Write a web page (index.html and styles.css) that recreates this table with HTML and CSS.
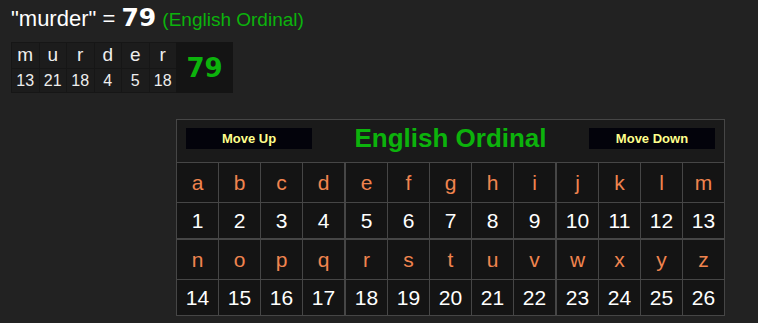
FILE: index.html
```html
<!DOCTYPE html>
<html>
<head>
    <title>Gematria - murder</title>
    <link rel="stylesheet" href="styles.css">
</head>
<body>
    <div class="result">
        <span class="phrase">"murder"</span> = <span class="total">79</span>
        <span class="cipher-name">(English Ordinal)</span>
    </div>

    <div class="breakdown">
        <div class="letters">
            <span>m</span><span>u</span><span>r</span><span>d</span><span>e</span><span>r</span>
            <span>13</span><span>21</span><span>18</span><span>4</span><span>5</span><span>18</span>
        </div>
        <div class="breakdown-sum">79</div>
    </div>

    <div class="chart-wrap">
        <table class="chart">
            <tr class="chart-head">
                <td colspan="13">
                    <div class="head-row">
                        <button class="move-btn">Move Up</button>
                        <span class="chart-title">English Ordinal</span>
                        <button class="move-btn">Move Down</button>
                    </div>
                </td>
            </tr>
            <tr class="row-letter">
                <td>a</td><td>b</td><td>c</td><td>d</td>
                <td class="split">e</td><td>f</td><td>g</td><td>h</td><td>i</td>
                <td class="split">j</td><td>k</td><td>l</td><td>m</td>
            </tr>
            <tr class="row-value">
                <td>1</td><td>2</td><td>3</td><td>4</td>
                <td class="split">5</td><td>6</td><td>7</td><td>8</td><td>9</td>
                <td class="split">10</td><td>11</td><td>12</td><td>13</td>
            </tr>
            <tr class="row-letter row-break">
                <td>n</td><td>o</td><td>p</td><td>q</td>
                <td class="split">r</td><td>s</td><td>t</td><td>u</td><td>v</td>
                <td class="split">w</td><td>x</td><td>y</td><td>z</td>
            </tr>
            <tr class="row-value">
                <td>14</td><td>15</td><td>16</td><td>17</td>
                <td class="split">18</td><td>19</td><td>20</td><td>21</td><td>22</td>
                <td class="split">23</td><td>24</td><td>25</td><td>26</td>
            </tr>
        </table>
    </div>
</body>
</html>
```

FILE: styles.css
```css
body {
    margin: 0;
    padding: 2px 11px 0;
    background: #222222;
    color: #ffffff;
    font-family: Arial, "Liberation Sans", sans-serif;
}

/* phrase = total line */
.result {
    font-size: 22px;
    line-height: 32px;
    white-space: nowrap;
}
.total {
    font-family: "DejaVu Sans", Verdana, sans-serif;
    font-size: 25px;
    font-weight: bold;
}
.cipher-name {
    font-size: 19px;
    color: #0cb30c;
}

/* per letter breakdown */
.breakdown {
    display: flex;
    margin-top: 6px;
    width: 222px;
    background: #161616;
}
.letters {
    display: grid;
    grid-template-columns: repeat(6, 26.5px);
    grid-template-rows: 25px 23px;
    gap: 1px;
    padding: 1px 0 1px 1px;
    background: #161616;
}
.letters span {
    background: #1c1c1c;
    font-size: 16px;
    text-align: center;
    line-height: 24px;
    color: #eeeeee;
}
.letters span:nth-child(-n+6) {
    font-size: 19px;
}
.breakdown-sum {
    flex: 1;
    display: flex;
    align-items: center;
    justify-content: center;
    font-family: "DejaVu Sans", Verdana, sans-serif;
    font-size: 26px;
    font-weight: bold;
    color: #0cb30c;
    background: #141414;
}

/* cipher chart */
.chart-wrap {
    padding-left: 165px;
    margin-top: 26px;
}
.chart {
    border-collapse: collapse;
    background: #141414;
    font-size: 21px;
}
.chart td {
    border: 1px solid #464646;
    width: 41px;
    padding: 0;
    text-align: center;
}
.chart td.split {
    border-left: 2px solid #464646;
}
.chart-head td {
    background: #1a1a1a;
    height: 42px;
}
.head-row {
    display: flex;
    align-items: center;
    justify-content: space-between;
    padding: 0 9px 5px;
}
.move-btn {
    width: 126px;
    height: 21px;
    border: none;
    background: #03030b;
    color: #ffff8c;
    font-family: Arial, "Liberation Sans", sans-serif;
    font-size: 13px;
    font-weight: bold;
    padding: 0;
}
.chart-title {
    font-size: 26px;
    font-weight: bold;
    color: #0cb30c;
}
.row-letter td {
    height: 39px;
    color: #f0844f;
}
.row-value td {
    height: 35px;
    color: #ffffff;
}
.row-break td {
    border-top: 2px solid #464646;
}
```
